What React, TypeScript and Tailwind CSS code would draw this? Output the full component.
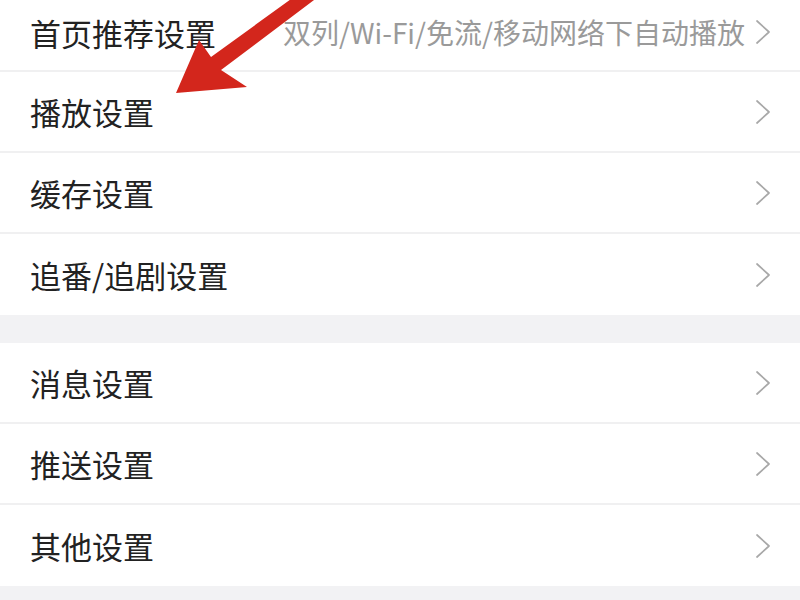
interface RowProps {
    label: string;
    value?: string;
    first?: boolean;
    last?: boolean;
}

function Chevron() {
    return (
        <svg width="16" height="26" viewBox="0 0 16 26" className="shrink-0">
            <polyline points="2,2 14,13 2,24" fill="none" stroke="#a8a8a8" strokeWidth="1.7" strokeLinecap="round" strokeLinejoin="round" />
        </svg>
    );
}

function Row({ label, value, first, last }: RowProps) {
    return (
        <div
            className={
                "flex items-center justify-between bg-white pl-[30px] pr-[29px] " +
                (first ? "h-[72px] pb-[6px] " : "h-[81px] ") +
                (last ? "" : "border-b-2 border-[#f0f0f1]")
            }
        >
            <span className="text-[31px] leading-none text-[#222]">{label}</span>
            <div className="flex items-center gap-[10px]">
                {value && <span className="text-[28px] leading-none text-[#9a9a9a]">{value}</span>}
                <Chevron />
            </div>
        </div>
    );
}

export default function App() {
    return (
        <div
            className="relative w-[800px] h-[600px] overflow-hidden bg-[#f2f2f4]"
            style={{ fontFamily: '"Noto Sans CJK SC", "Noto Sans", sans-serif' }}
        >
            <div className="flex flex-col">
                <Row first label="首页推荐设置" value="双列/Wi-Fi/免流/移动网络下自动播放" />
                <Row label="播放设置" />
                <Row label="缓存设置" />
                <Row last label="追番/追剧设置" />
            </div>
            <div className="h-[28px]" />
            <div className="flex flex-col">
                <Row label="消息设置" />
                <Row label="推送设置" />
                <Row last label="其他设置" />
            </div>

            {/* red annotation arrow */}
            <svg className="absolute left-0 top-0" width="800" height="600" viewBox="0 0 800 600">
                <polygon
                    points="176,93 199,40 211,57 298,-6 322,-6 221,70 247,87"
                    fill="#d3261c"
                />
            </svg>
        </div>
    );
}
